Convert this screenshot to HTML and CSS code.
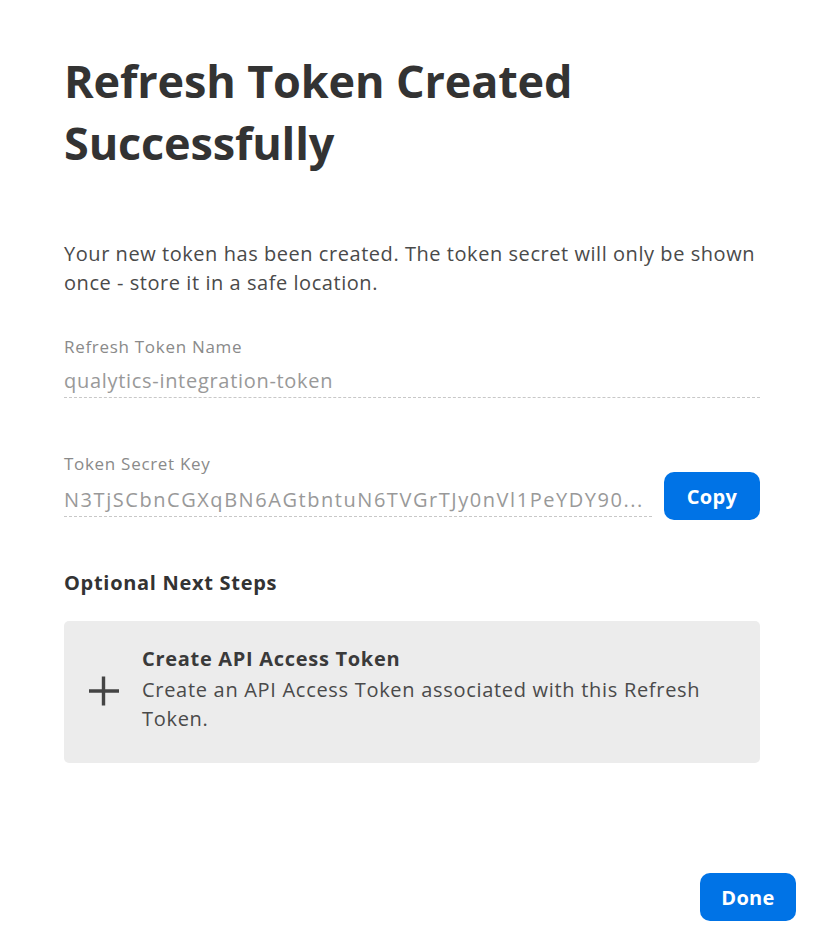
FILE: index.html
```html
<!DOCTYPE html>
<html>
<head>
<meta charset="utf-8">
<link rel="stylesheet" href="styles.css">
</head>
<body>
<div class="modal">
  <h1 class="title">Refresh Token Created Successfully</h1>
  <p class="intro">Your new token has been created. The token secret will only be shown once - store it in a safe location.</p>
  <div class="field">
    <div class="label">Refresh Token Name</div>
    <div class="value">qualytics-integration-token</div>
  </div>
  <div class="field secret">
    <div class="label">Token Secret Key</div>
    <div class="row">
      <div class="value key">N3TjSCbnCGXqBN6AGtbntuN6TVGrTJy0nVl1PeYDY90...</div>
      <button class="btn copy">Copy</button>
    </div>
  </div>
  <h2 class="steps">Optional Next Steps</h2>
  <div class="card">
    <svg class="plus" width="32" height="32" viewBox="0 0 32 32"><path d="M15.5 1.5v29M1 16h30" stroke="#444" stroke-width="3.4" fill="none"/></svg>
    <div class="card-text">
      <div class="card-title">Create API Access Token</div>
      <div class="card-desc">Create an API Access Token associated with this Refresh Token.</div>
    </div>
  </div>
  <div class="footer">
    <button class="btn done">Done</button>
  </div>
</div>
</body>
</html>
```
FILE: styles.css
```css
html, body {
  margin: 0;
  padding: 0;
  background: #fff;
}
body {
  font-family: "Open Sans", Roboto, sans-serif;
  color: #3a3a3a;
  letter-spacing: 0.7px;
}
.modal {
  width: 824px;
  height: 942px;
  box-sizing: border-box;
  padding: 50px 28px 0 64px;
  display: flex;
  flex-direction: column;
}
.title {
  margin: 0;
  width: 580px;
  font-size: 45px;
  line-height: 62px;
  font-weight: 700;
  color: #333;
  letter-spacing: -0.15px;
}
.intro {
  margin: 65px 28px 0 0;
  font-size: 20px;
  line-height: 29px;
  color: #4a4a4a;
  letter-spacing: 0.55px;
}
.field {
  margin: 39px 36px 0 0;
}
.secret {
  margin-top: 55px;
}
.label {
  font-size: 17px;
  line-height: 22px;
  color: #8a8a8a;
}
.value {
  margin-top: 9px;
  font-size: 20px;
  line-height: 28px;
  color: #999;
  border-bottom: 1px dashed #c8c8c8;
  padding-bottom: 2px;
  white-space: nowrap;
  overflow: hidden;
}
.key {
  letter-spacing: 1.55px;
}
.row {
  display: flex;
  align-items: flex-end;
  gap: 12px;
}
.row .value {
  flex: 1;
  min-width: 0;
  margin-top: 6px;
}
.btn {
  border: none;
  background: #0073e6;
  color: #fff;
  font-family: "Open Sans", Roboto, sans-serif;
  font-weight: 700;
  font-size: 20px;
  letter-spacing: 0.3px;
  width: 96px;
  height: 48px;
  border-radius: 10px;
  padding: 0;
}
.copy {
  margin: -3px 0 -3px;
}
.steps {
  margin: 52px 0 0;
  font-size: 20px;
  line-height: 28px;
  font-weight: 700;
  color: #333;
}
.card {
  margin: 24px 36px 0 0;
  background: #ececec;
  border-radius: 5px;
  height: 142px;
  box-sizing: border-box;
  display: flex;
  align-items: center;
  padding: 0 40px 0 24px;
  gap: 22px;
}
.plus {
  flex: none;
  margin-top: -3px;
}
.card-text {
  font-size: 20px;
  line-height: 29px;
  color: #4a4a4a;
  margin-top: -8px;
}
.card-title {
  font-weight: 700;
  color: #3a3a3a;
  margin-bottom: 2px;
}
.footer {
  margin-top: auto;
  display: flex;
  justify-content: flex-end;
  padding-bottom: 21px;
}
.done {
  margin: 0;
}
```
